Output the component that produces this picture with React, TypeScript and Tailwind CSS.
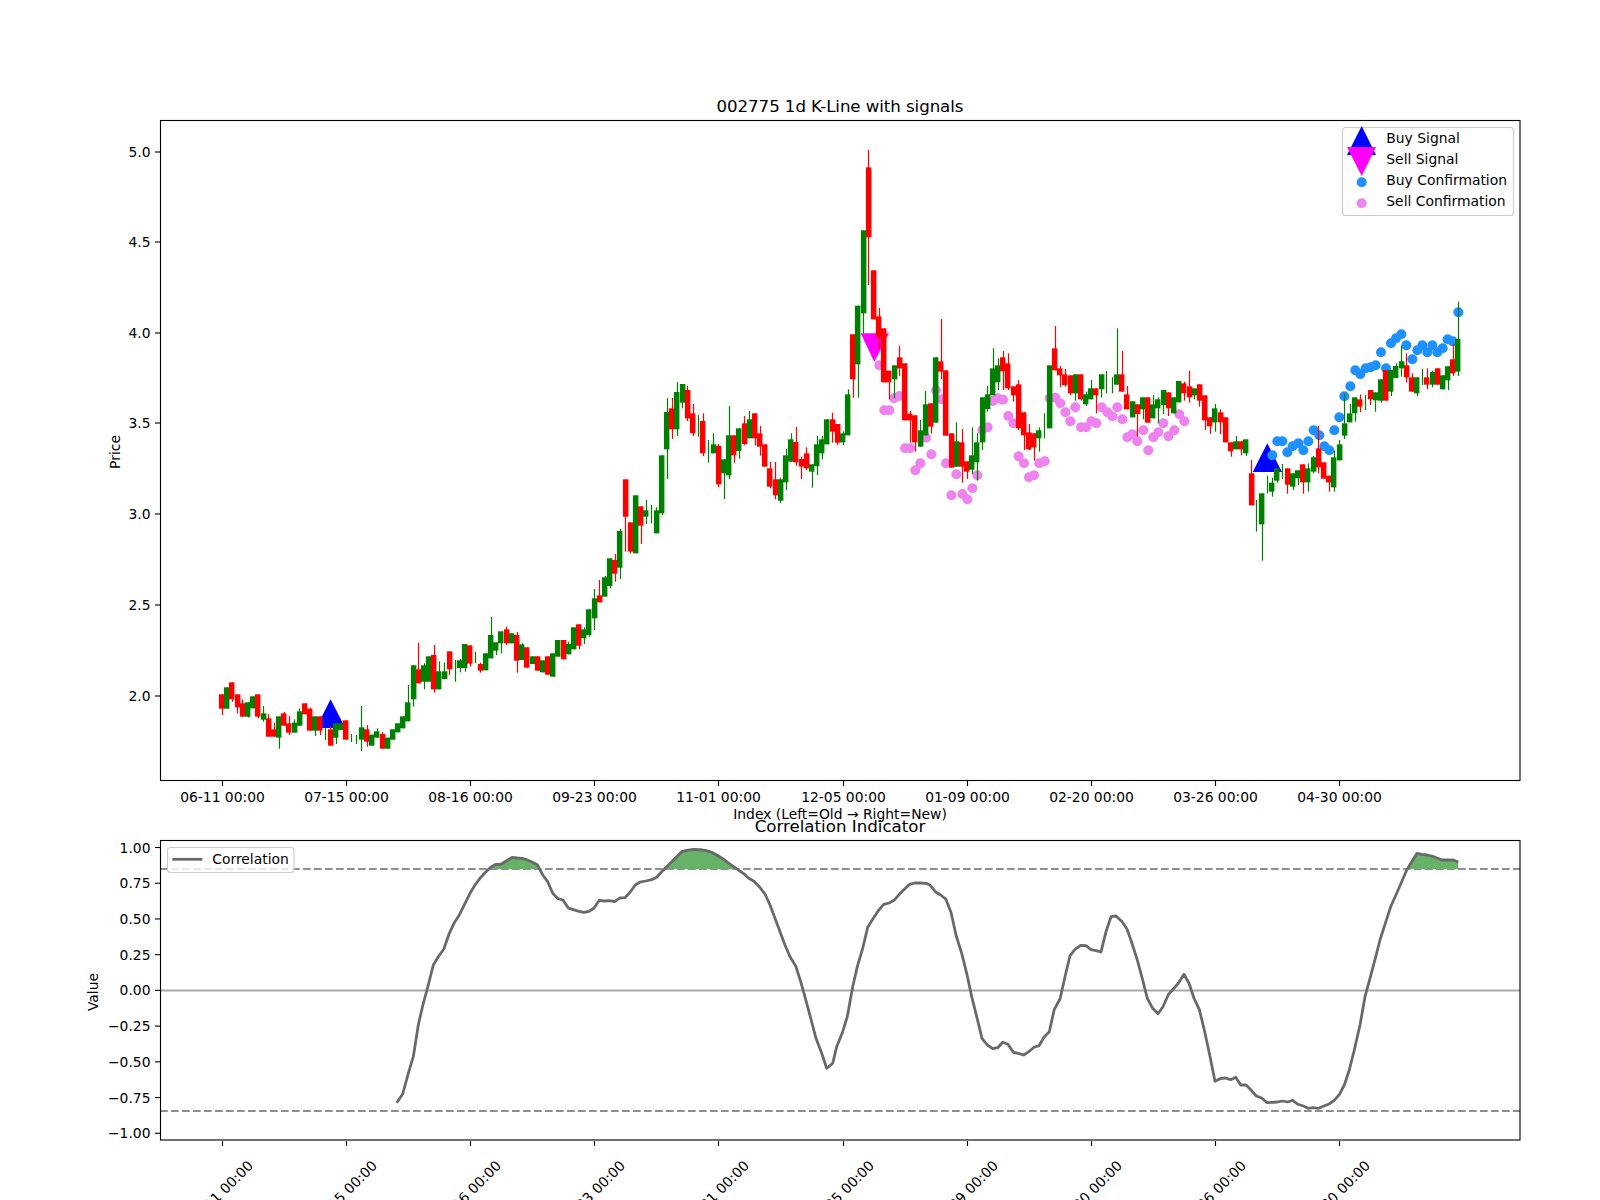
import React from "react";

type C = [string, number, number, number, number];
// colour, body top, body bottom, wick top (0 = none), wick bottom (0 = none)
const seg1: C[] = [
["r",223,266,0,285],["g",202,266,0,0],["r",187,238,0,245],["r",223,262,0,280],["r",250,290,238,0],["g",247,290,0,293],["g",229,265,0,0],["r",223,290,0,295],["g",280,299,258,305],["r",295,350,282,0],
["r",328,350,308,0],["g",289,353,0,386],["r",280,317,276,0],["r",310,338,288,345],["g",308,338,298,0],["g",274,317,265,0],["r",250,283,0,0],["r",266,332,263,0],["g",289,332,0,348],["r",289,332,0,345],
["g",0,0,322,360],["r",328,377,318,0],["g",310,353,0,372],["g",310,330,0,0],["r",301,359,0,0],["g",0,0,342,366],["g",0,0,345,372],["g",322,359,258,393],["r",328,365,315,380],["g",344,377,0,0],
["g",334,353,325,0],["r",342,386,336,0],["g",353,386,0,0],["g",328,359,0,0],["g",310,337,0,0],["g",289,325,0,0],["g",247,304,195,0],["g",136,238,0,260],["r",148,190,68,0],["g",136,185,130,208],
["g",109,185,0,0],["r",105,208,75,218],["g",154,208,124,0],["g",154,177,127,0],["r",94,148,0,165],["g",0,0,120,185],["g",121,144,117,157],["g",72,144,0,155],["r",76,131,0,140],["g",0,0,95,130],
["r",132,152,128,158],["g",100,151,0,0],["g",45,115,-9,0],["g",67,92,0,105],["g",34,70,0,100],["r",28,70,20,75],["g",40,70,0,0],["r",45,122,36,158],["g",73,120,70,0],["r",82,143,0,0],
["g",109,132,0,0],["r",109,152,0,0],["g",121,157,0,0],["r",109,164,0,0],["g",100,170,0,0],["g",60,110,0,0],
];
const seg2: C[] = [
["r",900,958,0,0],["g",912,943,905,0],["g",862,928,0,0],["r",853,917,0,927],["g",868,895,862,912],["g",808,885,0,890],["g",775,835,747,870],["r",766,787,720,0],["g",712,770,708,0],["g",655,738,0,745],
["r",660,701,642,725],["g",573,683,567,717],["r",418,530,0,635],["r",547,635,0,640],["g",466,640,0,0],["r",499,557,0,612],["g",511,530,480,552],["g",0,0,495,550],["g",511,580,502,0],["g",346,520,0,525],
["g",216,328,174,417],["r",205,268,174,297],["g",156,268,126,288],["g",132,188,0,205],["r",150,235,138,243],["r",220,280,192,288],["g",0,0,225,290],["r",243,340,220,348],["g",0,0,300,368],["g",313,340,280,0],
["r",318,433,312,442],["g",358,400,0,477],["g",286,406,198,417],["r",286,346,0,368],["g",265,333,0,356],["r",250,312,228,316],["g",238,295,213,0],["r",220,295,0,316],["r",280,320,258,347],["r",313,380,0,0],
["r",385,440,366,445],["r",418,466,366,478],["g",418,482,413,488],["g",346,427,327,450],["g",298,365,280,0],["r",306,367,261,377],["r",357,380,350,417],["r",340,385,322,390],["g",373,395,0,443],["g",313,378,288,405],
["g",298,340,288,358],["g",238,313,0,0],["r",238,275,218,308],["r",252,308,0,315],["g",280,307,274,315],["g",163,286,148,0],
];
const seg3: C[] = [
["r",613,748,0,803],["g",527,703,0,803],["g",301,550,0,610],["r",112,322,60,465],["r",421,568,0,0],["r",559,622,534,658],["r",595,757,0,0],["r",722,757,0,808],["g",706,748,0,805],["r",682,715,648,738],
["r",700,871,0,0],["r",851,871,843,938],["r",856,937,0,965],["g",901,950,870,0],["g",823,916,783,0],["r",820,890,0,911],["g",682,878,0,0],["r",694,725,567,747],["r",721,917,0,0],["r",910,1013,0,0],
["g",934,1010,877,0],["r",937,1010,897,1058],["r",994,1025,0,1047],["g",976,1019,892,1032],["g",937,997,910,1052],["g",802,937,0,960],["g",793,837,768,845],["g",715,796,655,0],["g",706,757,685,780],["r",682,724,663,780],
["r",700,775,670,780],["r",769,796,0,815],["r",763,895,750,900],["r",847,916,0,960],["r",907,958,882,960],["r",910,952,0,992],["g",901,925,892,965],["g",0,0,850,925],["g",706,895,0,0],["r",655,721,588,0],
["r",715,736,708,772],["r",733,765,717,770],["r",736,790,0,795],["g",733,790,0,812],["r",733,808,0,812],["g",793,823,785,828],["g",775,808,750,0],["r",775,796,0,850],
];
const seg4: C[] = [
["g",223,268,0,293],["g",0,0,213,280],["g",0,0,232,280],["g",223,254,85,0],["r",223,275,153,0],["r",283,328,258,0],["g",304,352,0,0],["r",313,342,0,410],["g",292,328,0,358],["r",292,368,0,0],
["g",313,355,285,0],["g",298,325,292,370],["g",270,315,0,342],["r",277,325,0,348],["g",292,340,0,0],["g",243,307,0,0],["r",250,280,245,302],["r",259,292,212,308],["g",265,286,0,298],["r",253,302,0,320],
["r",286,361,0,390],["r",352,379,0,402],["g",325,367,312,395],["r",337,367,328,402],["r",352,427,0,0],["r",427,454,0,470],["g",424,448,408,0],["r",424,448,0,466],["g",418,460,0,468],["r",520,616,480,0],
["g",0,0,600,695],["g",580,673,0,782],["g",0,0,527,580],["g",548,575,533,590],["g",505,542,0,548],["g",0,0,492,537],["r",505,554,0,581],["g",520,560,0,570],["g",511,535,0,555],["r",493,547,0,581],
["g",505,547,490,575],["g",472,515,468,520],["r",445,502,378,520],["r",487,536,0,0],["r",527,547,0,575],["g",472,562,452,575],["g",433,481,420,0],["g",370,407,280,417],["g",340,367,312,0],["g",292,340,0,365],
["r",298,320,283,337],["g",0,0,285,330],["r",270,298,0,315],["g",277,301,0,335],["g",238,302,0,308],["r",210,302,0,0],["g",210,275,0,288],["g",198,234,190,0],["g",184,205,138,230],["r",196,232,160,248],
["r",232,275,220,0],["g",232,280,0,288],["g",0,0,207,255],["r",232,254,205,268],["g",216,254,212,262],["r",205,254,0,0],["g",226,268,0,0],["g",199,241,0,270],["r",178,220,132,228],["g",117,215,5,228],
];

const toReal = (s: C[], y0: number) =>
  s.map(([c, a, b, t, d]) => ({
    c: c === "r" ? "#ff0000" : "#008000",
    top: a ? y0 + a / 3 : 0,
    bot: b ? y0 + b / 3 : 0,
    wt: t ? y0 + t / 3 : a ? y0 + a / 3 : 0,
    wb: d ? y0 + d / 3 : b ? y0 + b / 3 : 0,
  }));
const candles = [...toReal(seg1, 620), ...toReal(seg2, 340), ...toReal(seg3, 130), ...toReal(seg4, 300)];
const barX = (i: number) => 222.3 + 5.173 * i;

const pink3 = [[178,706],[193,841],[208,841],[222,805],[238,798],[255,955],[270,955],[286,1021],[301,1000],[318,923],[334,973],[348,781],[364,808],[378,1000],[394,1096],[409,1033],[427,1092],[442,1108],[457,1075],[472,1036],[487,900],[503,892],[519,813],[534,805],[549,809],[565,858],[580,880],[596,979],[612,1000],[627,1042],[642,1036],[658,1000],[674,994],[689,805],[706,803],[721,820],[736,847],[751,874],[766,832],[783,892],[798,892],[814,874],[829,880]];
const pink4 = [[5,322],[22,337],[37,349],[52,322],[67,358],[82,412],[97,403],[112,424],[130,391],[145,451],[160,412],[175,397],[190,370],[205,409],[223,391],[238,343],[253,364]];
const blue4 = [[517,466],[532,424],[547,424],[562,457],[578,439],[595,430],[610,451],[625,424],[641,391],[658,406],[673,439],[688,451],[703,391],[718,352],[733,289],[751,259],[766,211],[781,223],[797,205],[812,202],[827,196],[843,157],[858,205],[873,130],[888,115],[904,103],[919,136],[937,178],[952,151],[967,136],[982,157],[997,136],[1012,157],[1028,145],[1043,118],[1058,124],[1075,37]];

const line6 = [[950,938],[968,912],[985,850],[1000,800],[1015,705],[1030,640],[1045,585],[1060,525],[1075,500],[1091,478],[1108,430],[1122,400],[1138,375],[1155,340],[1170,310],[1185,285],[1200,265],[1215,248],[1232,232],[1248,223],[1263,223],[1280,212],[1296,202],[1312,204],[1325,205],[1340,209],[1356,216],[1372,224],[1388,255],[1403,275],[1418,310],[1434,326],[1449,330],[1465,354]];
const line7 = [[0,356],[27,364],[42,367],[57,364],[72,354],[88,331],[103,333],[118,332],[134,335],[149,324],[165,323],[180,307],[196,285],[211,276],[227,273],[245,269],[260,262],[275,245],[290,230],[305,215],[320,200],[335,185],[350,181],[370,178],[390,179],[410,182],[425,187],[442,196],[458,206],[474,218],[490,229],[505,240],[520,250],[536,265],[552,274],[568,290],[585,312],[600,345],[615,385],[630,425],[645,465],[660,500],[677,528],[692,575],[708,632],[723,688],[738,745],[755,790],[770,835],[788,820],[800,770],[818,725],[832,680],[848,590],[862,530],[878,475],[893,412],[910,385],[925,362],[941,343],[957,339],[972,331],[988,313],[1003,298],[1019,283],[1035,279],[1050,279],[1068,280],[1081,286],[1097,306],[1112,315],[1127,327],[1143,367],[1158,435],[1175,490],[1190,550],[1205,620],[1220,680],[1236,745],[1252,765],[1268,776],[1283,773],[1298,757],[1314,763],[1330,787],[1345,790],[1361,795],[1376,785],[1392,772],[1407,767],[1423,740],[1438,725],[1453,658]];
const line8 = [[0,627],[15,560],[30,497],[45,478],[62,466],[78,467],[93,479],[108,482],[123,486],[138,425],[153,380],[168,378],[185,394],[201,417],[216,460],[232,510],[248,570],[262,625],[278,655],[294,671],[309,650],[325,614],[340,597],[355,580],[372,553],[387,580],[402,625],[418,658],[433,720],[449,795],[465,874],[480,866],[495,864],[512,869],[527,862],[542,885],[558,885],[574,901],[589,918],[605,924],[621,938],[637,937],[652,936],[667,933],[683,936],[698,931],[714,943],[730,948],[745,955],[760,953],[776,955],[792,948],[807,942],[822,932],[838,914],[853,885],[868,840],[883,780],[900,705],[915,620],[930,565],[946,505],[960,450],[976,400],[992,350],[1010,310],[1025,275],[1040,240],[1055,215],[1071,190],[1087,193],[1102,195],[1118,199],[1133,205],[1147,210],[1164,210],[1180,210],[1195,216]];

const pts = [
  ...line6.map(([x, y]) => [80 + x / 3, 790 + y / 3]),
  ...line7.map(([x, y]) => [570 + x / 3, 790 + y / 3]),
  ...line8.map(([x, y]) => [1060 + x / 3, 790 + y / 3]),
];
const lineStr = pts.map((p) => p[0].toFixed(1) + "," + p[1].toFixed(1)).join(" ");
const fillStr = lineStr + " 1458,869 397,869";

const xTicks = [
  [222.5, "06-11 00:00"], [346.5, "07-15 00:00"], [470.5, "08-16 00:00"], [594.5, "09-23 00:00"], [718.5, "11-01 00:00"],
  [843.5, "12-05 00:00"], [967.5, "01-09 00:00"], [1091.5, "02-20 00:00"], [1215.5, "03-26 00:00"], [1339.5, "04-30 00:00"],
] as [number, string][];
const priceTicks = [[696.5, "2.0"], [605.5, "2.5"], [514.5, "3.0"], [423.5, "3.5"], [333.5, "4.0"], [242.5, "4.5"], [152.5, "5.0"]] as [number, string][];
const corrTicks = ["1.00", "0.75", "0.50", "0.25", "0.00", "\u22120.25", "\u22120.50", "\u22120.75", "\u22121.00"];

export default function App() {
  return (
    <div className="w-[1600px] h-[1200px] bg-white overflow-hidden flex flex-col font-['DejaVu_Sans'] text-[13.89px]">
      <svg width={1600} height={820} viewBox="0 0 1600 820" className="block shrink-0 overflow-visible">
        <text x={840} y={111.5} textAnchor="middle" fontSize={16.67} textLength={247}>002775 1d K-Line with signals</text>

        <polygon points="316,728 330.6,699.3 345.3,728" fill="#0000ff" />
        <polygon points="1252.7,472 1267.3,443.3 1282,472" fill="#0000ff" />
        <polygon points="860.7,333.3 889,333.3 874.3,362" fill="#ff00ff" />

        {pink3.map(([x, y], i) => (
          <circle key={"p3" + i} cx={820 + x / 3} cy={130 + y / 3} r={5} fill="#ee82ee" />
        ))}
        {pink4.map(([x, y], i) => (
          <circle key={"p4" + i} cx={1100 + x / 3} cy={300 + y / 3} r={5} fill="#ee82ee" />
        ))}
        {blue4.map(([x, y], i) => (
          <circle key={"b" + i} cx={1100 + x / 3} cy={300 + y / 3} r={5} fill="#1e90ff" />
        ))}

        {candles.map((d, i) => {
          const cx = barX(i);
          return (
            <g key={i}>
              <rect x={Math.floor(cx) - 0.1} y={d.wt} width={1.2} height={Math.max(0, d.wb - d.wt)} fill={d.c} />
              {d.top > 0 && <rect x={Math.round(cx - 3.15) - 0.1} y={d.top} width={5.5} height={d.bot - d.top} fill={d.c} />}
            </g>
          );
        })}

        <rect x={160.5} y={120.5} width={1359.5} height={660} fill="none" stroke="#000" strokeWidth={1.11} />
        {priceTicks.map(([y, l]) => (
          <g key={l}>
            <line x1={155} x2={160} y1={y - 0.5} y2={y - 0.5} stroke="#000" strokeWidth={1.11} />
            <text x={150.5} y={y + 4} textAnchor="end">{l}</text>
          </g>
        ))}
        {xTicks.map(([x, l]) => (
          <g key={l}>
            <line x1={x} x2={x} y1={781} y2={786} stroke="#000" strokeWidth={1.11} />
            <text x={x} y={801.5} textAnchor="middle">{l}</text>
          </g>
        ))}
        <text x={840} y={819} textAnchor="middle">Index (Left=Old → Right=New)</text>
        <text transform="translate(120 452) rotate(-90)" textAnchor="middle">Price</text>

        <rect x={1342.5} y={127.5} width={171} height={88} rx={3} fill="#ffffff" fillOpacity={0.8} stroke="#cccccc" strokeWidth={1.11} />
        <polygon points="1347,155 1361.7,126 1376,155" fill="#0000ff" />
        <polygon points="1347,147 1376,147 1361.7,176" fill="#ff00ff" />
        <circle cx={1361.7} cy={182.3} r={5} fill="#1e90ff" />
        <circle cx={1361.7} cy={203.3} r={5} fill="#ee82ee" />
        <text x={1386.3} y={143.3}>Buy Signal</text>
        <text x={1386.3} y={164.3}>Sell Signal</text>
        <text x={1386.3} y={185.3}>Buy Confirmation</text>
        <text x={1386.3} y={206.3}>Sell Confirmation</text>
      </svg>

      <svg width={1600} height={380} viewBox="0 820 1600 380" className="block shrink-0 overflow-visible">
        <text x={840} y={831.5} textAnchor="middle" fontSize={16.67}>Correlation Indicator</text>
        <line x1={160} x2={1520} y1={990.5} y2={990.5} stroke="#a9a9a9" strokeWidth={2} />
        <line x1={160} x2={1520} y1={869} y2={869} stroke="#8f8f8f" strokeWidth={2.08} strokeDasharray="7.7 3.3" />
        <line x1={160} x2={1520} y1={1111} y2={1111} stroke="#8f8f8f" strokeWidth={2.08} strokeDasharray="7.7 3.3" />
        <clipPath id="above"><rect x={160} y={840} width={1360} height={29} /></clipPath>
        <polygon points={fillStr} fill="#66b266" clipPath="url(#above)" />
        <polyline points={lineStr} fill="none" stroke="#696969" strokeWidth={2.78} strokeLinejoin="round" />

        <rect x={160.5} y={840.5} width={1359.5} height={299.5} fill="none" stroke="#000" strokeWidth={1.11} />
        {corrTicks.map((l, i) => {
          const y = 847.5 + i * 35.72;
          return (
            <g key={l}>
              <line x1={155} x2={160} y1={y} y2={y} stroke="#000" strokeWidth={1.11} />
              <text x={150.5} y={y + 5} textAnchor="end">{l}</text>
            </g>
          );
        })}
        {xTicks.map(([x, l]) => (
          <g key={l}>
            <line x1={x} x2={x} y1={1141} y2={1146} stroke="#000" strokeWidth={1.11} />
            <text transform={`translate(${x - 2} 1193) rotate(-45)`} textAnchor="middle" dominantBaseline="central">{l}</text>
          </g>
        ))}
        <text transform="translate(98 992) rotate(-90)" textAnchor="middle">Value</text>

        <rect x={167.5} y={847.5} width={126.5} height={25} rx={3} fill="#ffffff" fillOpacity={0.8} stroke="#cccccc" strokeWidth={1.11} />
        <line x1={172.3} x2={202.3} y1={859.3} y2={859.3} stroke="#696969" strokeWidth={2.78} />
        <text x={212.3} y={864.2}>Correlation</text>
      </svg>
    </div>
  );
}
